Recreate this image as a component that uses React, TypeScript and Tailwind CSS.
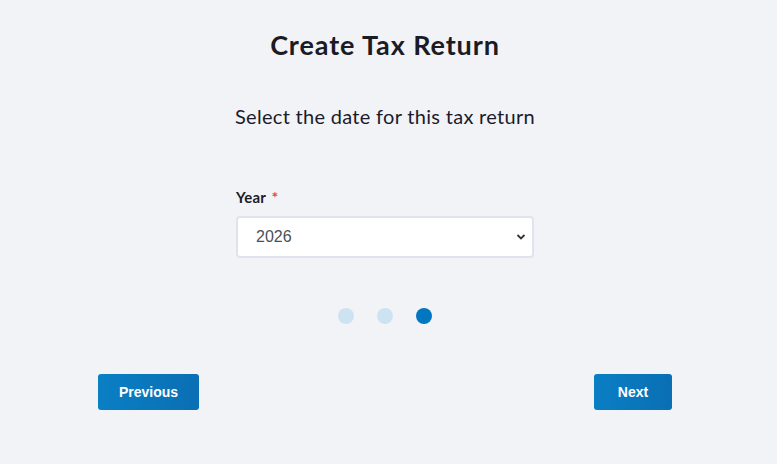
import React from "react";

export default function App() {
  return (
    <div className="min-h-[464px] w-[777px] bg-[#f2f3f7] font-['Lato','Noto_Sans',sans-serif] text-[#1b1b25]">
      <div className="w-[770px] flex flex-col items-center">
        <h1 className="mt-[29px] text-[27px] leading-[32px] font-bold tracking-[0.9px]">Create Tax Return</h1>
        <p className="mt-[42px] text-[20px] leading-[26px] tracking-[0.3px] text-[#1b1b2b]">Select the date for this tax return</p>
        <div className="mt-[58px] w-[298px] flex flex-col">
          <label className="text-[15px] leading-[20px] font-bold text-[#1b1b25] tracking-[0.2px]">
            Year <span className="ml-[2px] text-[16px] text-[#e5484d]">*</span>
          </label>
          <div className="mt-[9px] relative h-[42px] rounded-[4px] border-2 border-[#dfe3ee] bg-white flex items-center">
            <span className="pl-[18px] text-[16px] text-[#4a4f5c] font-['Liberation_Sans',sans-serif]">2026</span>
            <svg className="absolute right-[6px] top-[15px]" width="10" height="8" viewBox="0 0 10 8">
              <path d="M1.5 2 L5 5.5 L8.5 2" fill="none" stroke="#333" strokeWidth="1.8" />
            </svg>
          </div>
        </div>
        <div className="mt-[50px] flex gap-[23px]">
          <span className="w-4 h-4 rounded-full bg-[#cde3f2]" />
          <span className="w-4 h-4 rounded-full bg-[#cde3f2]" />
          <span className="w-4 h-4 rounded-full bg-[#0177c1]" />
        </div>
        <div className="mt-[50px] w-full px-[98px] flex justify-between">
          <button className="w-[101px] h-[36px] rounded-[3px] bg-gradient-to-r from-[#0a7fc4] to-[#0a6fb4] text-white text-[14px] font-bold font-['Liberation_Sans',sans-serif]">Previous</button>
          <button className="w-[78px] h-[36px] rounded-[3px] bg-gradient-to-r from-[#0a7fc4] to-[#0a6fb4] text-white text-[14px] font-bold font-['Liberation_Sans',sans-serif]">Next</button>
        </div>
      </div>
    </div>
  );
}
